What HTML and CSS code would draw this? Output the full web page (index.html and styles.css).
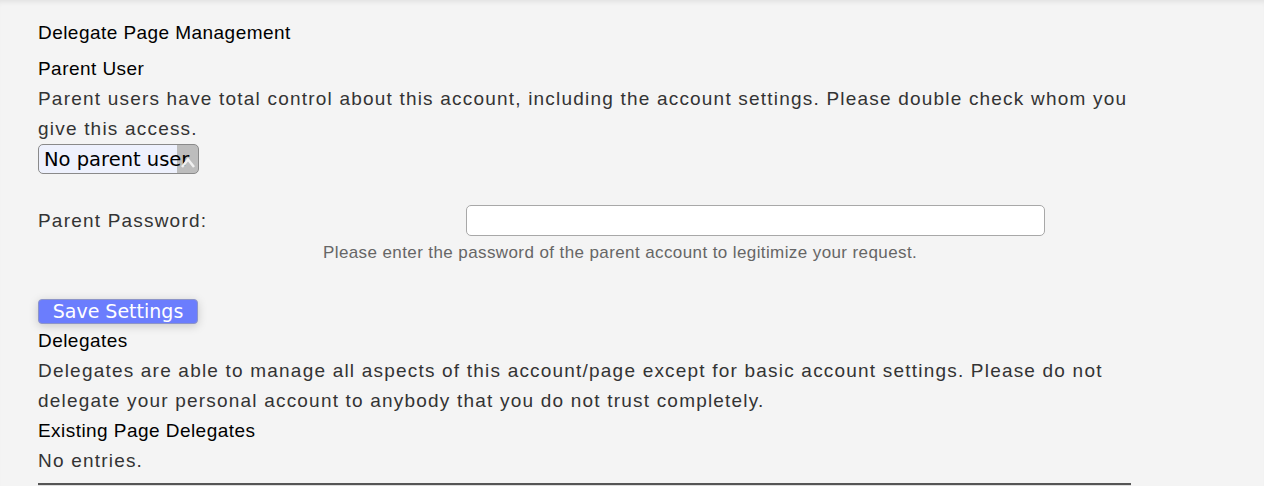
FILE: index.html
```html
<!DOCTYPE html>
<html lang="en">
<head>
  <meta charset="UTF-8">
  <title>Delegate Page Management</title>
  <link rel="stylesheet" href="styles.css">
</head>
<body>
  <div class="page">
    <div class="content">
      <div class="title">Delegate Page Management</div>

      <div class="heading">Parent User</div>
      <div class="desc">Parent users have total control about this account, including the account settings. Please double check whom you give this access.</div>
      <div class="select-wrap">
        <select class="select">
          <option>No parent user</option>
        </select>
        <span class="select-arrow">
          <svg width="22" height="28" viewBox="0 0 22 28"><path d="M6 22 L12 14.5 L18 22" fill="none" stroke="#f0f0f0" stroke-width="2.5"/></svg>
        </span>
      </div>

      <div class="field">
        <label class="field-label" for="parent-pw">Parent Password:</label>
        <input class="field-input" id="parent-pw" type="password">
      </div>
      <div class="hint">Please enter the password of the parent account to legitimize your request.</div>

      <button class="btn" type="button">Save Settings</button>

      <div class="heading">Delegates</div>
      <div class="desc">Delegates are able to manage all aspects of this account/page except for basic account settings. Please do not delegate your personal account to anybody that you do not trust completely.</div>
      <div class="heading">Existing Page Delegates</div>
      <div class="desc">No entries.</div>
      <hr class="rule">
    </div>
  </div>
</body>
</html>
```

FILE: styles.css
```css
html, body {
  margin: 0;
  height: 100%;
}
body {
  background: #f4f4f4;
  font-family: "Liberation Sans", Arial, sans-serif;
  overflow: hidden;
}
.page {
  min-height: 100%;
  box-shadow: inset 0 5px 5px -3px rgba(0,0,0,0.08);
  padding-top: 18px;
}
.content {
  margin-left: 38px;
  width: 1093px;
}
.title {
  font-size: 19px;
  line-height: 30px;
  letter-spacing: 0.45px;
  color: #000;
  margin-bottom: 6px;
}
.heading {
  font-size: 19px;
  line-height: 30px;
  letter-spacing: 0.45px;
  color: #000;
}
.desc {
  font-size: 19px;
  line-height: 30px;
  letter-spacing: 1.2px;
  color: #333;
}
.select-wrap {
  position: relative;
  display: inline-block;
  vertical-align: top;
}
.select {
  appearance: none;
  -webkit-appearance: none;
  display: block;
  width: 161px;
  height: 30px;
  margin: 0;
  padding: 0 0 0 5px;
  font-family: "DejaVu Sans", sans-serif;
  font-size: 19.5px;
  color: #000;
  background: linear-gradient(to right, #eef1fd 138px, #bdbdbd 138px);
  border: 1px solid #8a8a8a;
  border-radius: 5px;
}
.select-arrow {
  position: absolute;
  top: 1px;
  right: 1px;
  width: 22px;
  height: 28px;
  pointer-events: none;
}
.select-arrow svg {
  display: block;
}
.field {
  display: flex;
  align-items: center;
  margin-top: 31px;
}
.field-label {
  width: 428px;
  font-size: 19px;
  letter-spacing: 1.2px;
  color: #333;
}
.field-input {
  width: 579px;
  height: 31px;
  box-sizing: border-box;
  margin: 0;
  border: 1px solid #a8a8a8;
  border-radius: 5px;
  background: #fff;
}
.hint {
  margin-left: 285px;
  margin-top: 7px;
  font-size: 17px;
  line-height: 20px;
  color: #666;
  letter-spacing: 0.4px;
}
.btn {
  display: block;
  margin-top: 36px;
  width: 160px;
  height: 25px;
  padding: 0;
  font-family: "DejaVu Sans", sans-serif;
  font-size: 19px;
  line-height: 23px;
  color: #fff;
  background: #6b7dfd;
  border: 1px solid #8d95c8;
  border-radius: 4px;
  box-shadow: 0 2px 10px rgba(0,0,0,0.18);
}
.btn + .heading {
  margin-top: 2px;
}
.rule {
  margin: 7px 0 0;
  border: 0;
  border-top: 2px solid #555;
  border-bottom: 1px solid #ddd;
}
```
